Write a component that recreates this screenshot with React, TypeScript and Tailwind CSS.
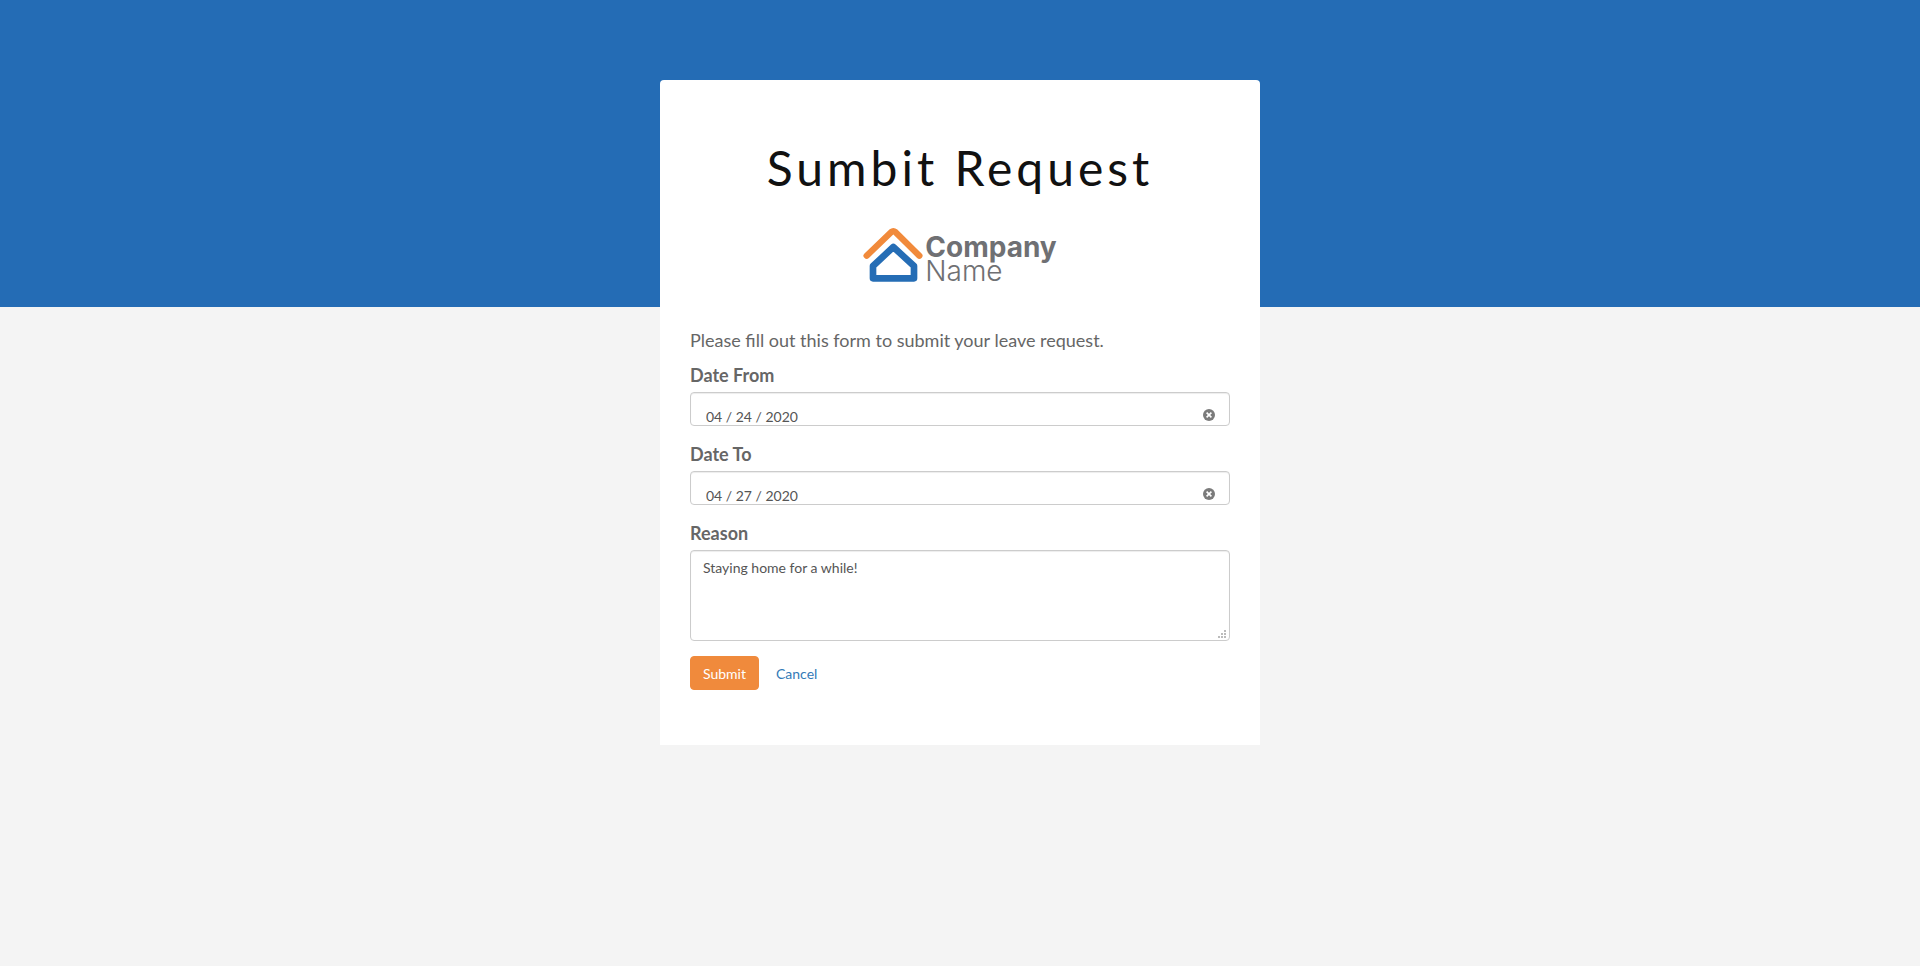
import { useState } from "react";

function CompanyLogo() {
  return (
    <div className="flex justify-center gap-0.5" role="img" aria-label="Company Name">
      <svg width="60" height="56" viewBox="0 0 180 168" fill="none" strokeLinejoin="round" strokeLinecap="round">
        <path d="M11 86 L85 15 Q91 10 97 15 L169 86" stroke="#f18a3b" strokeWidth="19" />
        <path d="M30 154 V117 L91 60 L153 117 V154 Z" stroke="#256db5" strokeWidth="20" />
      </svg>
      <div className="flex flex-col pt-2 font-['Inter',sans-serif] text-[28px] leading-6 text-[#6f7073]">
        <span className="font-bold">Company</span>
        <span className="font-light">Name</span>
      </div>
    </div>
  );
}

type DateFieldProps = { id: string; label: string; initial: string };

function DateField({ id, label, initial }: DateFieldProps) {
  const [value, setValue] = useState(initial);
  return (
    <div className="mb-4">
      <label htmlFor={id} className="mb-1 block text-lg leading-[25px] font-bold">
        {label}
      </label>
      <div className="flex h-[34px] items-end overflow-hidden rounded border border-[#ccc] bg-white pr-3.5 pl-[15px] shadow-[inset_0_1px_1px_rgba(0,0,0,0.075)]">
        <input
          id={id}
          type="text"
          value={value}
          onChange={(e) => setValue(e.target.value)}
          className="h-4 min-w-0 flex-1 bg-transparent text-sm leading-4 text-[#555] outline-none"
        />
        <button type="button" aria-label={`Clear ${label}`} onClick={() => setValue("")} className="mb-1">
          <svg width="12" height="12" viewBox="0 0 12 12" className="block">
            <circle cx="6" cy="6" r="6" fill="#7b7b7b" />
            <path d="M3.6 3.6 L8.4 8.4 M8.4 3.6 L3.6 8.4" stroke="#fff" strokeWidth="1.6" />
          </svg>
        </button>
      </div>
    </div>
  );
}

export default function App() {
  return (
    <div className="min-h-screen bg-[linear-gradient(#246cb5,#246cb5)] bg-[#f4f4f4] bg-[length:100%_307px] bg-no-repeat px-4 pt-20 pb-20 font-['Lato',sans-serif] text-[#666]">
      <main className="mx-auto max-w-[600px] rounded-t bg-white px-[30px] pt-[60px] pb-[55px]">
        <h1 className="text-center text-5xl leading-[55px] tracking-[4px] text-[#111]">Sumbit Request</h1>
        <div className="mt-8 mb-[45px]">
          <CompanyLogo />
        </div>
        <p className="mb-2.5 text-lg leading-[25px]">Please fill out this form to submit your leave request.</p>
        <form onSubmit={(e) => e.preventDefault()}>
          <DateField id="date-from" label="Date From" initial="04 / 24 / 2020" />
          <DateField id="date-to" label="Date To" initial="04 / 27 / 2020" />
          <div className="mb-[15px]">
            <label htmlFor="reason" className="mb-1 block text-lg leading-[25px] font-bold">
              Reason
            </label>
            <div className="relative">
              <textarea
                id="reason"
                defaultValue="Staying home for a while!"
                className="block h-[91px] w-full resize-none rounded border border-[#ccc] bg-white px-3 py-[7px] text-sm leading-5 text-[#555] shadow-[inset_0_1px_1px_rgba(0,0,0,0.075)] outline-none"
              />
              <svg
                width="8"
                height="8"
                viewBox="0 0 8 8"
                fill="#bbb"
                className="pointer-events-none absolute right-1 bottom-[3px]"
                aria-hidden="true"
              >
                <path d="M6 0h2v2H6z M3 3h2v2H3z M6 3h2v2H6z M0 6h2v2H0z M3 6h2v2H3z M6 6h2v2H6z" />
              </svg>
            </div>
          </div>
          <div className="flex items-center gap-[5px]">
            <button
              type="submit"
              className="rounded border border-[#f08a3c] bg-[#f08a3c] px-3 pt-[7px] pb-[5px] text-sm leading-5 text-white"
            >
              Submit
            </button>
            <a href="#cancel" className="px-3 pt-[7px] pb-[5px] text-sm leading-5 text-[#337ab7]">
              Cancel
            </a>
          </div>
        </form>
      </main>
    </div>
  );
}
